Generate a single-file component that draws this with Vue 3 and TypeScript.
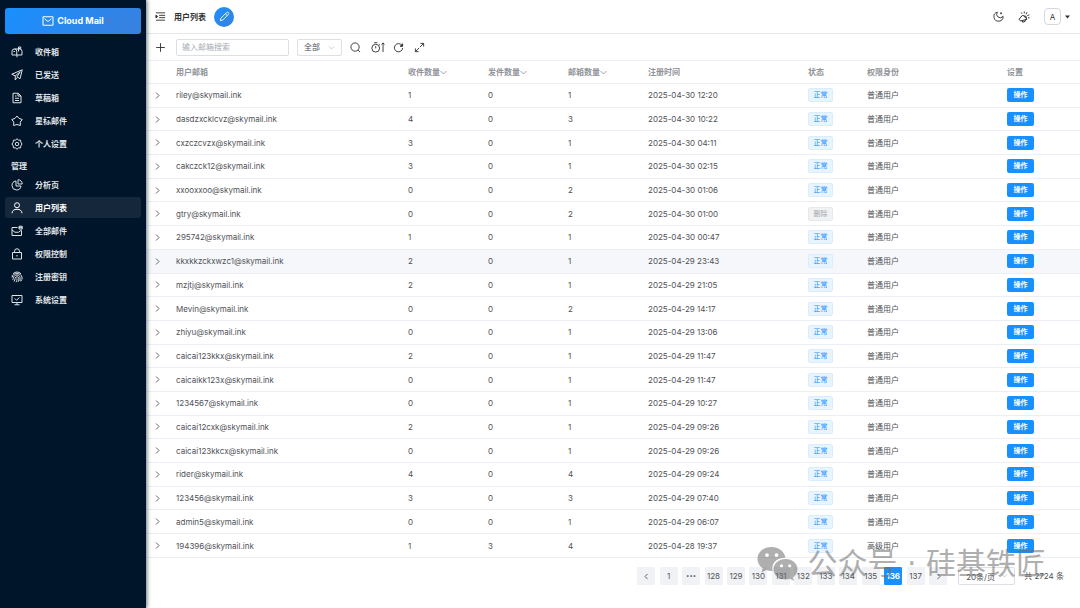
<script setup lang="ts">
import { ref } from 'vue'

interface MenuItem { label: string; icon: string }
interface User { email: string; received: number; sent: number; boxes: number; time: string; deleted?: boolean; role?: string }

const icons: Record<string, string[]> = {
  mailbox: ['M7 6h10.500a4.500 4.500 0 0 1 4.500 4.500V18H2v-7.500a4.750 4.500 0 0 1 9.500 0V18', 'M12 22.500V18', 'M15 11V2h4.500v3H15', 'M5 11h3'],
  send: ['M22.500 1.500 1.500 10.500l7 3.200L18.500 5.500 12 15.500l6 4z', 'M8.500 13.700V22l3.500-5'],
  draft: ['M4 2.500h10.500L20 8v13.500H4z', 'M14 2.500V8h6', 'M8 8h3M8 12.500h8M8 17h8'],
  star: ['M12 2l4 4.800 6.500 2.200-4 5.200.2 6.800-6.700-2-6.700 2 .2-6.800-4-5.200L8 6.800z'],
  gear: ['M12 1.500l3 2.700 4 .1.600 3.900 2.400 3.800-2.400 3.800-.6 3.900-4 .1-3 2.700-3-2.700-4-.1-.6-3.900L2 12l2.400-3.800.6-3.900 4-.1z', 'M12 8.500a3.500 3.500 0 1 1 0 7 3.500 3.500 0 0 1 0-7'],
  pie: ['M10 4a9 9 0 1 0 10 10H10z', 'M14 1.500V10h8.500A8.500 8.500 0 0 0 14 1.500z'],
  user: ['M12 1.500a5 5 0 1 1 0 10 5 5 0 0 1 0-10', 'M2 22.500c.5-5.500 4-8 10-8s9.500 2.500 10 8'],
  inbox: ['M13 5H2v16h19V11', 'M2 10l6 4.500h7l6-4.500', 'M16 2.500h6.500V8H16z', 'M16 5.250h6'],
  lock: ['M3 9h18v13H3z', 'M7 9V6.500a5 5 0 0 1 10 0V9', 'M12 14v3'],
  print: ['M4 5.500a11 11 0 0 1 16 0', 'M2 13C2.500 2.500 21.500 2.500 22 13v3', 'M3 18c3-3 1-10 9-10 6 0 7 5 6 12', 'M6 21c3-4 1-9.500 6-9.500s4 6.500 2 10.500', 'M10 22.500c2-3 2-5 2-8', 'M1.500 9l3.500 3M19.500 20.500l2.500-4'],
  monitor: ['M2 3h20v14H2z', 'M7 21.500h10M12 17v4', 'M7.500 9l3.500 3.500L17 7'],
}

const mainMenu: MenuItem[] = [
  { label: '收件箱', icon: 'mailbox' },
  { label: '已发送', icon: 'send' },
  { label: '草稿箱', icon: 'draft' },
  { label: '星标邮件', icon: 'star' },
  { label: '个人设置', icon: 'gear' },
]
const adminMenu: MenuItem[] = [
  { label: '分析页', icon: 'pie' },
  { label: '用户列表', icon: 'user' },
  { label: '全部邮件', icon: 'inbox' },
  { label: '权限控制', icon: 'lock' },
  { label: '注册密钥', icon: 'print' },
  { label: '系统设置', icon: 'monitor' },
]

const users: User[] = [
  { email: 'riley@skymail.ink', received: 1, sent: 0, boxes: 1, time: '2025-04-30 12:20' },
  { email: 'dasdzxcklcvz@skymail.ink', received: 4, sent: 0, boxes: 3, time: '2025-04-30 10:22' },
  { email: 'cxzczcvzx@skymail.ink', received: 3, sent: 0, boxes: 1, time: '2025-04-30 04:11' },
  { email: 'cakczck12@skymail.ink', received: 3, sent: 0, boxes: 1, time: '2025-04-30 02:15' },
  { email: 'xxooxxoo@skymail.ink', received: 0, sent: 0, boxes: 2, time: '2025-04-30 01:06' },
  { email: 'gtry@skymail.ink', received: 0, sent: 0, boxes: 2, time: '2025-04-30 01:00', deleted: true },
  { email: '295742@skymail.ink', received: 1, sent: 0, boxes: 1, time: '2025-04-30 00:47' },
  { email: 'kkxkkzckxwzc1@skymail.ink', received: 2, sent: 0, boxes: 1, time: '2025-04-29 23:43' },
  { email: 'mzjtj@skymail.ink', received: 2, sent: 0, boxes: 1, time: '2025-04-29 21:05' },
  { email: 'Mevin@skymail.ink', received: 0, sent: 0, boxes: 2, time: '2025-04-29 14:17' },
  { email: 'zhiyu@skymail.ink', received: 0, sent: 0, boxes: 1, time: '2025-04-29 13:06' },
  { email: 'caicai123kkx@skymail.ink', received: 2, sent: 0, boxes: 1, time: '2025-04-29 11:47' },
  { email: 'caicaikk123x@skymail.ink', received: 0, sent: 0, boxes: 1, time: '2025-04-29 11:47' },
  { email: '1234567@skymail.ink', received: 0, sent: 0, boxes: 1, time: '2025-04-29 10:27' },
  { email: 'caicai12cxk@skymail.ink', received: 2, sent: 0, boxes: 1, time: '2025-04-29 09:26' },
  { email: 'caicai123kkcx@skymail.ink', received: 0, sent: 0, boxes: 1, time: '2025-04-29 09:26' },
  { email: 'rider@skymail.ink', received: 4, sent: 0, boxes: 4, time: '2025-04-29 09:24' },
  { email: '123456@skymail.ink', received: 3, sent: 0, boxes: 3, time: '2025-04-29 07:40' },
  { email: 'admin5@skymail.ink', received: 0, sent: 0, boxes: 1, time: '2025-04-29 06:07' },
  { email: '194396@skymail.ink', received: 1, sent: 3, boxes: 4, time: '2025-04-28 19:37', role: '高级用户' },
]

const pages = ['1', '•••', '128', '129', '130', '131', '132', '133', '134', '135', '136', '137']
const currentPage = ref('136')
const activeMenu = ref('用户列表')
const keyword = ref('')
const hovered = 7
</script>

<template>
  <div class="app">
    <aside class="sidebar">
      <button class="brand" type="button">
        <svg class="brand-icon" viewBox="0 0 24 24"><path d="M2 3.500h20v17H2zM5 7.500l7 5.500 7-5.500" /></svg>
        Cloud Mail
      </button>
      <nav class="menu">
        <a v-for="m in mainMenu" :key="m.label" href="#" class="menu-item" @click.prevent="activeMenu = m.label" :class="{ active: activeMenu === m.label }">
          <svg class="menu-icon" viewBox="0 0 24 24"><path v-for="d in icons[m.icon]" :key="d" :d="d" /></svg>
          <span>{{ m.label }}</span>
        </a>
      </nav>
      <div class="group">管理</div>
      <nav class="menu">
        <a v-for="m in adminMenu" :key="m.label" href="#" class="menu-item" @click.prevent="activeMenu = m.label" :class="{ active: activeMenu === m.label }">
          <svg class="menu-icon" viewBox="0 0 24 24"><path v-for="d in icons[m.icon]" :key="d" :d="d" /></svg>
          <span>{{ m.label }}</span>
        </a>
      </nav>
    </aside>

    <main class="main">
      <header class="topbar">
        <button class="icon-btn" type="button" aria-label="折叠菜单">
          <svg class="icon" viewBox="0 0 24 24"><path d="M2 4h20M9 9.500h13M9 14.500h13M2 20h20" /><path class="solid" d="M6 12l-4-3v6z" /></svg>
        </button>
        <h1 class="title">用户列表</h1>
        <button class="compose" type="button" aria-label="写邮件">
          <svg class="compose-icon" viewBox="0 0 24 24"><path d="M3 21l1-5L16.500 3.500a2.500 2.500 0 0 1 4 4L8 20zM14 6l4 4" /></svg>
        </button>
        <div class="spacer"></div>
        <button class="icon-btn" type="button" aria-label="深色模式">
          <svg class="icon" viewBox="0 0 24 24"><path d="M9.500 2.500a7.500 7.500 0 0 0 12.500 9A10 10 0 1 1 9.500 2.500zM17.500 3v4M15.500 5h4" /></svg>
        </button>
        <button class="icon-btn notice" type="button" aria-label="公告">
          <svg class="notice-icon" viewBox="0 0 24 24"><path d="M9.500 8l8.500 8.500L5 20l-3-3.500zM8 19l1.500 3.500 5-2V18M12 10l4 .5 1 5M12.500 1v3.500M6.500 3l1.500 2.500M18 2.500l-2 4M22.500 7.500l-4 2M20 13.500h3" /></svg>
        </button>
        <button class="avatar" type="button">A</button>
        <svg class="caret" viewBox="0 0 10 6"><path d="M0 0h10L5 6z" /></svg>
      </header>

      <div class="toolbar">
        <button class="icon-btn" type="button" aria-label="添加">
          <svg class="icon" viewBox="0 0 24 24"><path d="M12 2.500v19M2.500 12h19" /></svg>
        </button>
        <input v-model="keyword" class="search" type="text" placeholder="输入邮箱搜索" aria-label="输入邮箱搜索" />
        <div class="select status-select">
          <select aria-label="状态"><option>全部</option></select>
          <svg class="chevron" viewBox="0 0 12 12"><path d="M1.500 4L6 8.500 10.500 4" /></svg>
        </div>
        <div class="tools">
          <button class="icon-btn" type="button" aria-label="搜索">
            <svg class="icon" viewBox="0 0 24 24"><path d="M11 2a9 9 0 1 1 0 18 9 9 0 0 1 0-18M17.500 17.500L22 22" /></svg>
          </button>
          <button class="icon-btn wide" type="button" aria-label="时间排序">
            <svg class="icon timer" viewBox="0 0 30 24"><path d="M10 5a8.500 8.500 0 1 1 0 17 8.500 8.500 0 0 1 0-17M6.500 1.500h7M10 9v5M17 4.500l2 2M26 22V2M22.500 5.500L26 2l3 3.500" /></svg>
          </button>
          <button class="icon-btn" type="button" aria-label="刷新">
            <svg class="icon" viewBox="0 0 24 24"><path d="M19.500 7.500A9 9 0 1 0 21 13" /><path class="solid" d="M21 4v5.500h-5.500z" /></svg>
          </button>
          <button class="icon-btn" type="button" aria-label="展开">
            <svg class="icon" viewBox="0 0 24 24"><path d="M14 3h7v7M21 3l-8 8M10 21H3v-7M3 21l8-8" /></svg>
          </button>
        </div>
      </div>

      <div class="table-wrap">
        <table class="table">
          <colgroup>
            <col class="c-expand" /><col /><col class="c-num" /><col class="c-num" /><col class="c-num" /><col class="c-time" /><col class="c-status" /><col class="c-role" /><col class="c-num" />
          </colgroup>
          <thead>
            <tr>
              <th></th>
              <th>用户邮箱</th>
              <th v-for="h in ['收件数量', '发件数量', '邮箱数量']" :key="h">{{ h }}<svg class="sort" viewBox="0 0 12 12"><path d="M1 3.500l5 5 5-5" /></svg></th>
              <th>注册时间</th>
              <th>状态</th>
              <th>权限身份</th>
              <th>设置</th>
            </tr>
          </thead>
          <tbody>
            <tr v-for="(u, i) in users" :key="u.email" :class="{ hovered: i === hovered }">
              <td>
                <button class="expand" type="button" aria-label="展开行"><svg viewBox="0 0 12 12"><path d="M4 2l4 4-4 4" /></svg></button>
              </td>
              <td>{{ u.email }}</td>
              <td>{{ u.received }}</td>
              <td>{{ u.sent }}</td>
              <td>{{ u.boxes }}</td>
              <td>{{ u.time }}</td>
              <td><span class="tag" :class="{ off: u.deleted }">{{ u.deleted ? '删除' : '正常' }}</span></td>
              <td>{{ u.role ?? '普通用户' }}</td>
              <td><button class="action" type="button">操作</button></td>
            </tr>
          </tbody>
        </table>
      </div>

      <footer class="pagination">
        <div class="pager">
          <button type="button" class="page" aria-label="上一页"><svg viewBox="0 0 12 12"><path d="M7.500 2.500L4 6l3.500 3.500" /></svg></button>
          <button v-for="p in pages" :key="p" type="button" class="page" :class="{ current: p === currentPage, dots: p === '•••' }" @click="currentPage = p">{{ p }}</button>
          <button type="button" class="page" aria-label="下一页"><svg viewBox="0 0 12 12"><path d="M4.500 2.500L8 6 4.500 9.500" /></svg></button>
        </div>
        <div class="select size-select">
          <select aria-label="每页条数"><option>20条/页</option></select>
          <svg class="chevron" viewBox="0 0 12 12"><path d="M1.500 4L6 8.500 10.500 4" /></svg>
        </div>
        <span class="total">共 2724 条</span>
      </footer>
    </main>

    <div class="watermark">
      <svg class="wechat" viewBox="0 0 40 34">
        <path fill-rule="evenodd" d="M14 0C6 0 0 5.200 0 12c0 4 2 7.200 5.200 9.300L4 25.500l5-2.500c2 .7 4 1 6 .9C13.500 16.500 19.500 10.500 28 10.800 27 4.500 21 0 14 0zM9.500 6.200a1.900 1.900 0 1 1 0 3.800 1.900 1.900 0 0 1 0-3.800zm9.500 0a1.900 1.900 0 1 1 0 3.800 1.900 1.900 0 0 1 0-3.800z" />
        <path fill-rule="evenodd" d="M28 12c-6.800 0-12 4.500-12 10.200s5.200 10.200 12 10.200c1.500 0 3-.2 4.300-.6l4.200 2.200-1-3.600c2.800-2 4.500-4.800 4.500-8.200C40 16.500 34.800 12 28 12zm-4 5.200a1.600 1.600 0 1 1 0 3.200 1.600 1.600 0 0 1 0-3.200zm8.200 0a1.600 1.600 0 1 1 0 3.200 1.600 1.600 0 0 1 0-3.200z" />
      </svg>
      <span>公众号 · 硅基铁匠</span>
    </div>
  </div>
</template>

<style>
body {
  margin: 0;
}
</style>

<style scoped>
.app {
  position: relative;
  display: flex;
  min-height: 100vh;
  background: #fff;
  color: #505257;
  font-family: Inter, "Noto Sans CJK SC", sans-serif;
  font-size: 8px;
  line-height: 12px;
}
.app * {
  box-sizing: border-box;
}
button,
input,
select {
  margin: 0;
  padding: 0;
  border: 0;
  background: none;
  color: inherit;
  font: inherit;
}
svg {
  display: block;
  fill: none;
  stroke: currentColor;
  stroke-width: 2;
  stroke-linejoin: round;
}
.solid {
  fill: currentColor;
}
.sidebar {
  z-index: 1;
  flex: 0 0 146px;
  padding: 8px 5px;
  background: #001529;
  box-shadow: 1px 0 4px rgba(0, 21, 41, 0.6);
  color: #e0e4e8;
  font-weight: 600;
}
.brand {
  display: flex;
  align-items: center;
  justify-content: center;
  gap: 3px;
  width: 100%;
  height: 26px;
  border-radius: 3px;
  background: linear-gradient(135deg, #1890ff, #3a80dd);
  color: #fff;
  font-size: 9px;
  font-weight: 700;
}
.brand-icon {
  width: 12px;
  height: 12px;
}
.menu {
  display: flex;
  flex-direction: column;
  gap: 2px;
}
.brand + .menu {
  margin-top: 7px;
}
.menu-item {
  display: flex;
  align-items: center;
  gap: 12px;
  height: 21px;
  padding-left: 6px;
  border-radius: 3px;
  color: inherit;
  text-decoration: none;
}
.menu-item.active {
  background: #15273a;
  color: #fff;
  font-weight: 700;
}
.menu-icon {
  width: 12px;
  height: 12px;
}
.group {
  padding: 6px 6px 2px;
}
.main {
  display: flex;
  flex: 1;
  flex-direction: column;
  min-width: 0;
  height: 100vh;
}
.topbar {
  display: flex;
  align-items: center;
  height: 34px;
  padding: 0 10px 0 9px;
  border-bottom: 1px solid #e6e7ea;
}
.icon-btn {
  color: #303133;
}
.icon {
  width: 11px;
  height: 11px;
}
.timer {
  width: 14px;
}
.notice-icon {
  width: 12px;
  height: 12px;
}
.title {
  margin: 0 8px;
  color: #303133;
  font-size: 8px;
  font-weight: 700;
}
.compose {
  display: grid;
  place-items: center;
  width: 20px;
  height: 20px;
  border-radius: 50%;
  background: linear-gradient(135deg, #1890ff, #3a80dd);
  color: #fff;
}
.compose-icon {
  width: 11px;
  height: 11px;
}
.spacer {
  flex: 1;
}
.notice {
  margin: 0 14px;
}
.avatar {
  width: 17px;
  height: 17px;
  border: 1px solid #d4d7de;
  border-radius: 4px;
  color: #303133;
}
.caret {
  width: 5px;
  height: 4px;
  margin-left: 4px;
  fill: #303133;
  stroke: none;
}
.toolbar {
  display: flex;
  align-items: center;
  height: 27px;
  padding-left: 9px;
  border-bottom: 1px solid #ebeef5;
}
.search {
  width: 113px;
  height: 17px;
  margin: 0 8px 0 10px;
  padding: 0 5px;
  border: 1px solid #dcdfe6;
  border-radius: 2px;
}
.search::placeholder {
  color: #a8abb2;
  opacity: 1;
}
.select {
  position: relative;
}
.select select {
  width: 100%;
  height: 100%;
  padding: 0 6px;
  border: 1px solid #dcdfe6;
  border-radius: 2px;
  appearance: none;
}
.select .chevron {
  position: absolute;
  top: 5px;
  right: 7px;
  width: 7px;
  height: 7px;
  color: #a8abb2;
  stroke-width: 1;
  pointer-events: none;
}
.status-select {
  width: 45px;
  height: 17px;
}
.tools {
  display: flex;
  align-items: center;
  gap: 10px;
  margin-left: 8px;
}
.wide {
  margin-right: -2px;
}
.table-wrap {
  flex: 1;
  min-height: 0;
}
.table {
  width: 100%;
  height: 100%;
  border-spacing: 0;
  table-layout: fixed;
}
.c-expand {
  width: 23px;
}
.c-num {
  width: 80px;
}
.c-time {
  width: 160px;
}
.c-status {
  width: 59px;
}
.c-role {
  width: 140px;
}
th,
td {
  padding: 0 0 0 7px;
  border-bottom: 1px solid #ebeef5;
  text-align: left;
  white-space: nowrap;
}
th {
  height: 23px;
  color: #909399;
  font-weight: 600;
}
.hovered td {
  background: #f5f7fa;
}
.sort {
  display: inline-block;
  width: 7px;
  height: 7px;
  vertical-align: -1px;
  stroke-width: 1.5;
}
.expand {
  display: block;
}
.expand svg,
.page svg {
  width: 9px;
  height: 9px;
  stroke-width: 1.2;
}
.tag,
.action {
  display: block;
  height: 14px;
  border-radius: 2px;
  font-size: 7px;
  line-height: 12px;
  text-align: center;
}
.tag {
  width: 25px;
  border: 1px solid #d9edff;
  background: #e8f4ff;
  color: #1890ff;
}
.tag.off {
  border-color: #e9e9eb;
  background: #f1f2f3;
  color: #a3a6ad;
}
.action {
  width: 27px;
  background: #1890ff;
  color: #fff;
  font-weight: 600;
}
.pagination {
  display: flex;
  align-items: flex-start;
  justify-content: flex-end;
  height: 50px;
  padding: 9px 16px 0 0;
  line-height: 18px;
}
.pager {
  display: flex;
  justify-content: space-between;
  width: 310px;
}
.page {
  display: grid;
  place-items: center;
  width: 18px;
  height: 18px;
  border-radius: 1px;
  background: #f0f2f5;
}
.page.dots {
  font-size: 6px;
}
.page.current {
  background: #1890ff;
  color: #fff;
  font-weight: 700;
}
.size-select {
  width: 57px;
  height: 18px;
  margin: 0 9px 0 11px;
}
.size-select select {
  padding: 0 7px;
}
.watermark {
  position: absolute;
  right: 34px;
  bottom: 26px;
  z-index: 2;
  display: flex;
  align-items: center;
  gap: 9px;
  color: #6e6e6e;
  font-family: "DejaVu Sans", "Noto Sans CJK SC", sans-serif;
  font-size: 30px;
  line-height: 36px;
  opacity: 0.55;
  white-space: nowrap;
  pointer-events: none;
}
.wechat {
  width: 41px;
  height: 34px;
  fill: currentColor;
  stroke: none;
}
</style>
